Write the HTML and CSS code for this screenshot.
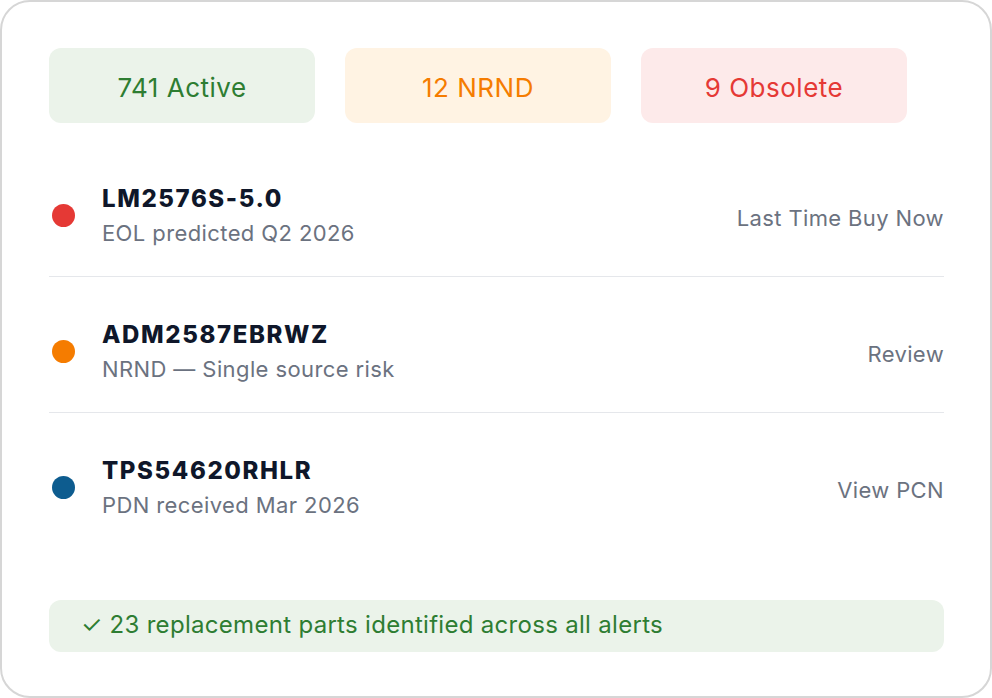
FILE: index.html
```html
<!DOCTYPE html>
<html lang="en">
<head>
<meta charset="utf-8">
<title>Lifecycle alerts</title>
<link rel="stylesheet" href="styles.css">
</head>
<body>
<div class="card">
  <div class="badges">
    <div class="badge badge-active">741 Active</div>
    <div class="badge badge-nrnd">12 NRND</div>
    <div class="badge badge-obsolete">9 Obsolete</div>
  </div>
  <div class="list">
    <div class="row">
      <span class="dot dot-red"></span>
      <div class="info">
        <div class="part">LM2576S-5.0</div>
        <div class="note">EOL predicted Q2 2026</div>
      </div>
      <div class="action">Last Time Buy Now</div>
    </div>
    <div class="row">
      <span class="dot dot-orange"></span>
      <div class="info">
        <div class="part">ADM2587EBRWZ</div>
        <div class="note">NRND — Single source risk</div>
      </div>
      <div class="action">Review</div>
    </div>
    <div class="row">
      <span class="dot dot-blue"></span>
      <div class="info">
        <div class="part">TPS54620RHLR</div>
        <div class="note">PDN received Mar 2026</div>
      </div>
      <div class="action">View PCN</div>
    </div>
  </div>
  <div class="summary">✓ 23 replacement parts identified across all alerts</div>
</div>
</body>
</html>
```

FILE: styles.css
```css
* { box-sizing: border-box; }
html, body { margin: 0; padding: 0; background: #ffffff; }
body {
  width: 992px;
  height: 698px;
  font-family: Inter, "Noto Sans", "Liberation Sans", sans-serif;
}
.card {
  width: 992px;
  height: 698px;
  border: 2px solid #d6d6d6;
  border-radius: 30px;
  padding: 46px 46px 0 47px;
  background: #ffffff;
}
.badges {
  display: flex;
  gap: 30px;
}
.badge {
  width: 266px;
  height: 75px;
  padding-top: 3px;
  border-radius: 12px;
  display: flex;
  align-items: center;
  justify-content: center;
  font-size: 26px;
  letter-spacing: 0.5px;
}
.badge-active { background: #ebf3ea; color: #2e7d32; }
.badge-nrnd { background: #fff3e3; color: #f57c00; }
.badge-obsolete { background: #fdeaea; color: #e53935; }
.list { margin-top: 18px; }
.row {
  display: flex;
  align-items: center;
  padding: 42px 0 28px;
  border-bottom: 1px solid #e5e7eb;
}
.row:last-child { border-bottom: none; }
.dot {
  width: 23px;
  height: 23px;
  border-radius: 50%;
  margin-left: 3px;
  margin-right: 27px;
  flex: none;
}
.dot-red { background: #e53935; }
.dot-orange { background: #f57c00; }
.dot-blue { background: #0d5c8f; }
.info { flex: 1; }
.part {
  font-size: 24px;
  line-height: 32px;
  font-weight: 800;
  letter-spacing: 1.6px;
  color: #0f172a;
}
.note {
  margin-top: 3px;
  font-size: 22px;
  line-height: 30px;
  letter-spacing: 0.4px;
  color: #6b7280;
}
.action {
  margin-top: 4px;
  font-size: 22px;
  line-height: 30px;
  letter-spacing: 0.37px;
  color: #6b7280;
}
.summary {
  margin-top: 52px;
  height: 52px;
  border-radius: 12px;
  background: #ebf3ea;
  color: #2e7d32;
  font-size: 24px;
  letter-spacing: 0.3px;
  display: flex;
  align-items: center;
  padding-left: 32px;
  padding-bottom: 3px;
}
```
